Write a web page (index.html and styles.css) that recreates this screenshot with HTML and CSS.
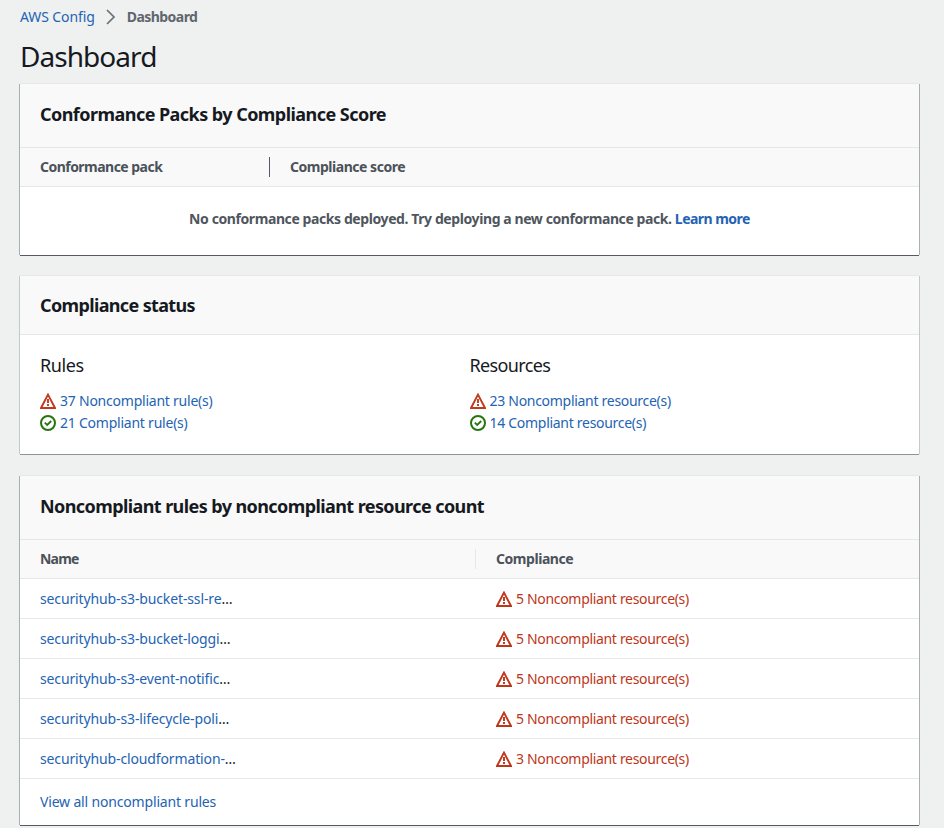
FILE: index.html
```html
<!DOCTYPE html>
<html lang="en">
<head>
<meta charset="utf-8">
<title>AWS Config - Dashboard</title>
<link rel="stylesheet" href="styles.css">
</head>
<body>
<svg class="defs" width="0" height="0" aria-hidden="true">
  <symbol id="warning" viewBox="0 0 16 16">
    <path d="M8 1.6 15 15H1z" fill="none" stroke="currentColor" stroke-width="1.9"/>
    <path d="M8 6v4M8 11v2" fill="none" stroke="currentColor" stroke-width="1.9"/>
  </symbol>
  <symbol id="success" viewBox="0 0 16 16">
    <circle cx="8" cy="8" r="7" fill="none" stroke="currentColor" stroke-width="2"/>
    <path d="M4.8 7.7 7.2 10l4-4" fill="none" stroke="currentColor" stroke-width="1.8"/>
  </symbol>
</svg>
<nav class="breadcrumb">
  <a href="#">AWS Config</a>
  <svg class="chevron" viewBox="0 0 10 16"><path d="M1 1l7 7-7 7" fill="none" stroke="currentColor" stroke-width="1.7"/></svg>
  <span class="current">Dashboard</span>
</nav>
<h1>Dashboard</h1>
<main>
  <section class="card packs">
    <header class="tall"><h2>Conformance Packs by Compliance Score</h2></header>
    <div class="thead"><span class="col">Conformance pack</span><span class="col score">Compliance score</span></div>
    <p class="empty">No conformance packs deployed. Try deploying a new conformance pack. <a href="#">Learn more</a></p>
  </section>
  <section class="card status">
    <header><h2>Compliance status</h2></header>
    <div class="groups">
      <div class="group">
        <h3>Rules</h3>
        <div class="item"><svg class="icon red"><use href="#warning"/></svg><a href="#">37 Noncompliant rule(s)</a></div>
        <div class="item"><svg class="icon green"><use href="#success"/></svg><a href="#">21 Compliant rule(s)</a></div>
      </div>
      <div class="group resources">
        <h3>Resources</h3>
        <div class="item"><svg class="icon red"><use href="#warning"/></svg><a href="#">23 Noncompliant resource(s)</a></div>
        <div class="item"><svg class="icon green"><use href="#success"/></svg><a href="#">14 Compliant resource(s)</a></div>
      </div>
    </div>
  </section>
  <section class="card rules">
    <header class="tall"><h2>Noncompliant rules by noncompliant resource count</h2></header>
    <div class="thead"><span class="col">Name</span><span class="col">Compliance</span></div>
    <div class="row"><span class="name"><a href="#">securityhub-s3-bucket-ssl-re</a>…</span><span class="count"><svg class="icon"><use href="#warning"/></svg>5 Noncompliant resource(s)</span></div>
    <div class="row"><span class="name"><a href="#">securityhub-s3-bucket-loggi</a>…</span><span class="count"><svg class="icon"><use href="#warning"/></svg>5 Noncompliant resource(s)</span></div>
    <div class="row"><span class="name"><a href="#">securityhub-s3-event-notific</a>…</span><span class="count"><svg class="icon"><use href="#warning"/></svg>5 Noncompliant resource(s)</span></div>
    <div class="row"><span class="name"><a href="#">securityhub-s3-lifecycle-poli</a>…</span><span class="count"><svg class="icon"><use href="#warning"/></svg>5 Noncompliant resource(s)</span></div>
    <div class="row"><span class="name"><a href="#">securityhub-cloudformation-</a>…</span><span class="count"><svg class="icon"><use href="#warning"/></svg>3 Noncompliant resource(s)</span></div>
    <footer><a href="#">View all noncompliant rules</a></footer>
  </section>
</main>
</body>
</html>
```
FILE: styles.css
```css
* { box-sizing: border-box; }
body {
  margin: 0;
  padding: 0 25px 0 20px;
  height: 828px;
  overflow: hidden;
  background: #eff1f1;
  color: #16191f;
  font: 14px/22px "Noto Sans", "Open Sans", sans-serif;
  letter-spacing: -0.2px;
}
a { color: #2463b3; text-decoration: none; }
h1, h2, h3, p { margin: 0; }
.defs { display: block; height: 0; }
.breadcrumb { display: flex; align-items: center; height: 22px; margin-top: 6px; letter-spacing: -0.1px; }
.chevron { width: 10px; height: 16px; margin: 0 11px; color: #687078; }
.current { color: #5f666d; font-weight: 700; letter-spacing: -0.55px; }
h1 { height: 56px; font-size: 28px; line-height: 56px; font-weight: 400; letter-spacing: -0.95px; }
main { display: flex; flex-direction: column; gap: 21px; }
.card {
  background: #fff;
  box-shadow: 0 -1px 0 #e6e8e8, 0 1px 0 #8d9498, 1px 0 0 #c3c8c9, -1px 0 0 #c3c8c9;
}
.packs { height: 171px; box-shadow: 0 -1px 0 #e6e8e8, 0 1px 0 #545b64, 1px 0 0 #a9afb1, -1px 0 0 #a9afb1; }
.status { height: 178px; }
.rules { height: 349px; margin-top: 1px; box-shadow: 0 -1px 0 #e6e8e8, 0 1px 0 #545b64, 1px 0 0 #a9afb1, -1px 0 0 #a9afb1; }
header { height: 59px; padding: 0 20px; background: #f9f9f9; border-bottom: 1px solid #e4e8e8; }
header.tall { height: 64px; }
h2 { font-size: 18px; line-height: 60px; font-weight: 700; letter-spacing: -0.546px; }
.status h2 { line-height: 58px; letter-spacing: -0.64px; }
.rules h2 { line-height: 60px; letter-spacing: -0.586px; }
.thead {
  display: grid;
  grid-template-columns: 250px 1fr;
  align-items: center;
  height: 39px;
  background: #f9f9f9;
  border-bottom: 1px solid #e4e8e8;
  color: #4b525a;
  font-weight: 700;
}
.col { padding-left: 20px; line-height: 20px; letter-spacing: -0.53px; }
.col:first-child { border-right: 1px solid #545b64; }
.score { letter-spacing: -0.475px; }
.empty { line-height: 20px; padding-top: 22px; text-align: center; color: #4f565e; font-weight: 700; letter-spacing: -0.41px; white-space: nowrap; }
.empty a { letter-spacing: -0.53px; }
.groups { display: grid; grid-template-columns: 429.5px 1fr; padding: 18px 20px 0; }
h3 { font-size: 18px; line-height: 24px; font-weight: 400; letter-spacing: -0.4px; margin-bottom: 13px; }
.resources h3 { letter-spacing: -0.64px; }
.item { display: flex; align-items: center; height: 22px; gap: 4px; letter-spacing: -0.23px; }
.resources .item { letter-spacing: -0.29px; }
.icon { width: 16px; height: 16px; flex: none; }
.red { color: #c03a1e; }
.green { color: #267510; }
.rules .thead, .row { grid-template-columns: 456px 1fr; }
.rules .col:first-child { border-color: #e4e8e8; letter-spacing: -0.8px; }
.rules .col:last-child { letter-spacing: -0.45px; }
.row { display: grid; align-items: center; height: 40px; border-bottom: 1px solid #e6e9e9; }
.row > span { padding-left: 20px; }
.row .name { letter-spacing: 1.6px; }
.name a { letter-spacing: -0.13px; }
.row .count { display: flex; align-items: center; gap: 4px; color: #bd3619; letter-spacing: -0.32px; }
footer { height: 46px; padding: 0 20px; line-height: 46px; letter-spacing: -0.17px; }
```
